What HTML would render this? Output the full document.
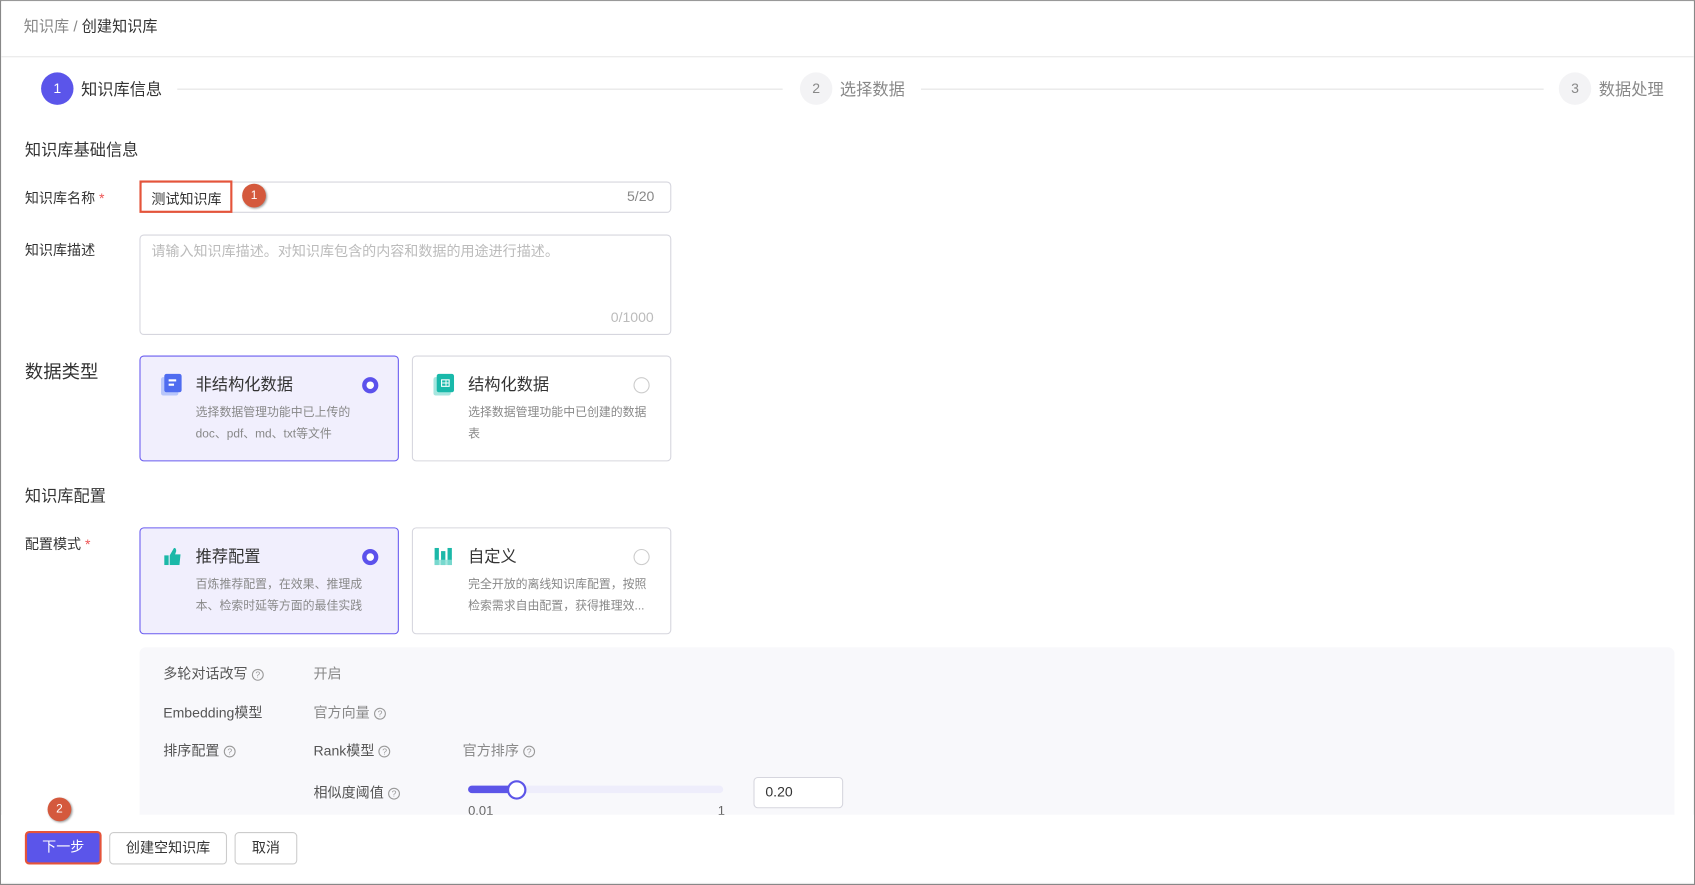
<!DOCTYPE html>
<html><head><meta charset="utf-8"><style>
*{box-sizing:border-box;margin:0;padding:0}
html,body{width:1695px;height:885px;overflow:hidden;background:#fff}
#s{position:absolute;left:0;top:0;width:1568px;height:819px;transform-origin:0 0;transform:scale(1.081,1.0806);font-family:"Liberation Sans","Noto Sans CJK SC",sans-serif;color:#333;border:1px solid #888;border-top:1px solid #999}
.a{position:absolute;white-space:nowrap}
.t13{font-size:13px}
.g{color:#888}
.box{position:absolute;border:1px solid #d6d6de;border-radius:4px;background:#fff}
.sel{border-color:#6a5cf0;background:#f1effd}
.radio{position:absolute;width:15px;height:15px;border-radius:50%;border:1px solid #ccc;background:#fff}
.radio.on{border:4px solid #5c52ec}
.q{display:inline-block;width:11px;height:11px;border:1px solid #999;border-radius:50%;font-size:8px;line-height:9px;text-align:center;color:#999;vertical-align:1px;margin-left:4px}
.btn{position:absolute;height:30px;border:1px solid #ccc;border-radius:4px;font-size:13px;line-height:28px;text-align:center;background:#fff}
</style></head><body><div id="s">
<div class="a" style="left:21px;top:13px;font-size:14px"><span class="g">知识库</span> <span class="g">/</span> 创建知识库</div>
<div class="a" style="left:0;top:51px;width:1566px;height:1px;background:#e8e8e8"></div>

<div class="a" style="left:37px;top:66px;width:30px;height:30px;border-radius:50%;background:#5b55ea;color:#fff;font-size:13px;text-align:center;line-height:30px">1</div>
<div class="a" style="left:74px;top:71px;font-size:15px">知识库信息</div>
<div class="a" style="left:163px;top:81px;width:560px;height:1px;background:#e2e2e2"></div>
<div class="a" style="left:739px;top:66px;width:30px;height:30px;border-radius:50%;background:#f3f3f5;color:#888;font-size:13px;text-align:center;line-height:30px">2</div>
<div class="a g" style="left:776px;top:71px;font-size:15px">选择数据</div>
<div class="a" style="left:851px;top:81px;width:576px;height:1px;background:#e2e2e2"></div>
<div class="a" style="left:1441px;top:66px;width:30px;height:30px;border-radius:50%;background:#f3f3f5;color:#888;font-size:13px;text-align:center;line-height:30px">3</div>
<div class="a g" style="left:1478px;top:71px;font-size:15px">数据处理</div>

<div class="a" style="left:22px;top:127px;font-size:15px">知识库基础信息</div>
<div class="a t13" style="left:22px;top:172px">知识库名称 <span style="color:#e55">*</span></div>
<div class="box" style="left:128px;top:167px;width:492px;height:29px"></div>
<div class="a t13" style="left:128px;top:166px;width:86px;height:30px;border:2px solid #e5543a;padding:5px 0 0 9px">测试知识库</div>
<div class="a" style="left:223px;top:169px;width:22px;height:22px;border-radius:50%;background:#d4593d;color:#fff;font-size:11px;text-align:center;line-height:22px;box-shadow:1px 1px 2px #999">1</div>
<div class="a t13 g" style="left:579px;top:173px">5/20</div>
<div class="a t13" style="left:22px;top:220px">知识库描述</div>
<div class="box" style="left:128px;top:216px;width:492px;height:93px"></div>
<div class="a t13" style="left:139px;top:221px;color:#bbb">请输入知识库描述。对知识库包含的内容和数据的用途进行描述。</div>
<div class="a t13" style="left:564px;top:285px;color:#bbb">0/1000</div>

<div class="a" style="left:22px;top:329px;font-size:17px">数据类型</div>
<div class="box sel" style="left:128px;top:328px;width:240px;height:98px"></div>
<div class="a" style="left:151px;top:345px;width:16px;height:17px;background:#4f6cf0;border-radius:2px;box-shadow:-3px 3px 0 #b8c6fb"><div style="position:absolute;left:4px;top:5px;width:7px;height:2px;background:#fff"></div><div style="position:absolute;left:4px;top:9px;width:5px;height:2px;background:#fff"></div></div>
<div class="a" style="left:180px;top:344px;font-size:15px">非结构化数据</div>
<div class="radio on" style="left:334px;top:348px"></div>
<div class="a g" style="left:180px;top:371px;font-size:11px;line-height:20px">选择数据管理功能中已上传的<br>doc、pdf、md、txt等文件</div>
<div class="box" style="left:380px;top:328px;width:240px;height:98px"></div>
<div class="a" style="left:403px;top:345px;width:16px;height:17px;background:#19b9aa;border-radius:2px;box-shadow:-3px 3px 0 #a5e6df"><div style="position:absolute;left:4px;top:5px;width:8px;height:7px;border:1px solid #fff;background:linear-gradient(90deg,transparent 3px,#fff 3px,#fff 4px,transparent 4px),linear-gradient(transparent 2px,#fff 2px,#fff 3px,transparent 3px)"></div></div>
<div class="a" style="left:432px;top:344px;font-size:15px">结构化数据</div>
<div class="radio" style="left:585px;top:348px"></div>
<div class="a g" style="left:432px;top:371px;font-size:11px;line-height:20px">选择数据管理功能中已创建的数据<br>表</div>

<div class="a" style="left:22px;top:447px;font-size:15px">知识库配置</div>
<div class="a t13" style="left:22px;top:492px">配置模式 <span style="color:#e55">*</span></div>
<div class="box sel" style="left:128px;top:487px;width:240px;height:99px"></div>
<div class="a" style="left:150px;top:506px;width:17px;height:16px"><svg width="17" height="16"><path d="M1 7h4v9H1z M6 7l4-7c2 0 2 2 2 3l-1 3h5l-1 10H6z" fill="#1bb8a8"/></svg></div>
<div class="a" style="left:180px;top:503px;font-size:15px">推荐配置</div>
<div class="radio on" style="left:334px;top:507px"></div>
<div class="a g" style="left:180px;top:530px;font-size:11px;line-height:20px">百炼推荐配置，在效果、推理成<br>本、检索时延等方面的最佳实践</div>
<div class="box" style="left:380px;top:487px;width:240px;height:99px"></div>
<div class="a" style="left:401px;top:506px"><svg width="17" height="16"><rect x="0" y="0" width="4" height="16" fill="#1bb8a8"/><rect x="6" y="3" width="4" height="13" fill="#1bb8a8"/><rect x="12" y="0" width="4" height="16" fill="#1bb8a8"/><rect x="0" y="11" width="16" height="5" fill="#8fe0d7" opacity=".8"/></svg></div>
<div class="a" style="left:432px;top:503px;font-size:15px">自定义</div>
<div class="radio" style="left:585px;top:507px"></div>
<div class="a g" style="left:432px;top:530px;font-size:11px;line-height:20px">完全开放的离线知识库配置，按照<br>检索需求自由配置，获得推理效...</div>

<div class="a" style="left:128px;top:598px;width:1420px;height:160px;background:#f8f8fb;border-radius:6px"></div>
<div class="a t13" style="left:150px;top:612px;color:#555">多轮对话改写<span class="q">?</span></div>
<div class="a t13 g" style="left:289px;top:612px">开启</div>
<div class="a t13" style="left:150px;top:648px;color:#555">Embedding模型</div>
<div class="a t13 g" style="left:289px;top:648px">官方向量<span class="q">?</span></div>
<div class="a t13" style="left:150px;top:683px;color:#555">排序配置<span class="q">?</span></div>
<div class="a t13" style="left:289px;top:683px;color:#555">Rank模型<span class="q">?</span></div>
<div class="a t13 g" style="left:427px;top:683px">官方排序<span class="q">?</span></div>
<div class="a t13" style="left:289px;top:722px;color:#555">相似度阈值<span class="q">?</span></div>
<div class="a" style="left:432px;top:726px;width:236px;height:7px;border-radius:4px;background:#eeedfb"></div>
<div class="a" style="left:432px;top:726px;width:45px;height:7px;border-radius:4px;background:#5c55e8"></div>
<div class="a" style="left:468px;top:721px;width:18px;height:18px;border-radius:50%;background:#fff;border:2px solid #5c55e8"></div>
<div class="a" style="left:432px;top:742px;font-size:12px;color:#666">0.01</div>
<div class="a" style="left:663px;top:742px;font-size:12px;color:#666">1</div>
<div class="box" style="left:696px;top:718px;width:83px;height:29px;font-size:13px;padding:5px 10px">0.20</div>

<div class="a" style="left:0;top:753px;width:1566px;height:64px;background:#fff;border-bottom:1px solid #e6e6e6"></div>
<div class="a" style="left:43px;top:737px;width:22px;height:22px;border-radius:50%;background:#d4593d;color:#fff;font-size:11px;text-align:center;line-height:22px;box-shadow:1px 1px 2px #999">2</div>
<div class="btn" style="left:22px;top:768px;width:71px;height:31px;background:#5b55ea;color:#fff;border:2px solid #e5543a;line-height:26px">下一步</div>
<div class="btn" style="left:100px;top:769px;width:109px;line-height:27px">创建空知识库</div>
<div class="btn" style="left:216px;top:769px;width:58px;line-height:27px">取消</div>
</div></body></html>
